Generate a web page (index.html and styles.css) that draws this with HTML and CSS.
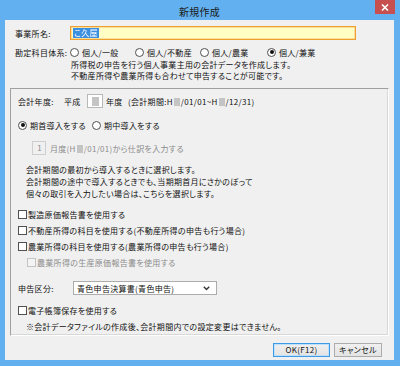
FILE: index.html
```html
<!DOCTYPE html>
<html lang="ja">
<head>
<meta charset="utf-8">
<link rel="stylesheet" href="styles.css">
</head>
<body>
<div class="window">
  <div class="titlebar">
    <span class="title">新規作成</span>
    <span class="close"><svg width="8" height="7" viewBox="0 0 8 7"><path d="M1 0.5 L7 6.5 M7 0.5 L1 6.5" stroke="#fff" stroke-width="1.6"/></svg></span>
  </div>
  <div class="content">
    <div class="row r-name">
      <span class="lbl lbl-top">事業所名:</span>
      <div class="input"><span class="sel">こ久屋</span></div>
    </div>
    <div class="row r-type">
      <span class="lbl lbl-top">勘定科目体系:</span>
      <span class="opt w65"><span class="radio"></span>個人/一般</span>
      <span class="opt w65"><span class="radio"></span>個人/不動産</span>
      <span class="opt w67"><span class="radio"></span>個人/農業</span>
      <span class="opt"><span class="radio on"></span>個人/兼業</span>
    </div>
    <div class="desc-top">
      <div>所得税の申告を行う個人事業主用の会計データを作成します。</div>
      <div>不動産所得や農業所得も合わせて申告することが可能です。</div>
    </div>
    <div class="group">
      <div class="row r-year">
        <span class="lbl-year">会計年度:</span>
        <span class="heisei">平成</span>
        <span class="ybox"><span class="blur b7"></span></span>
        <span class="nendo">年度</span>
        <span>(会計期間:H<span class="blur b6 inl"></span>/01/01~H<span class="blur b6 inl"></span>/12/31)</span>
      </div>
      <div class="row r-intro">
        <span class="opt w74"><span class="radio on"></span>期首導入をする</span>
        <span class="opt"><span class="radio"></span>期中導入をする</span>
      </div>
      <div class="row r-month dis">
        <span class="mbox">1</span>
        <span>月度(H<span class="blur b6 inl"></span>/01/01)から仕訳を入力する</span>
      </div>
      <div class="desc-mid">
        <div>会計期間の最初から導入するときに選択します。</div>
        <div>会計期間の途中で導入するときでも、当期期首月にさかのぼって</div>
        <div>個々の取引を入力したい場合は、こちらを選択します。</div>
      </div>
      <div class="checks">
        <div class="crow"><span class="cb"></span>製造原価報告書を使用する</div>
        <div class="crow"><span class="cb"></span>不動産所得の科目を使用する(不動産所得の申告も行う場合)</div>
        <div class="crow"><span class="cb"></span>農業所得の科目を使用する(農業所得の申告も行う場合)</div>
        <div class="crow sub dis"><span class="cb"></span>農業所得の生産原価報告書を使用する</div>
      </div>
      <div class="row r-kubun">
        <span class="lbl-kubun">申告区分:</span>
        <div class="select"><span>青色申告決算書(青色申告)</span><svg width="7" height="5" viewBox="0 0 7 5"><path d="M0.8 0.8 L3.5 3.6 L6.2 0.8" fill="none" stroke="#333" stroke-width="1.4"/></svg></div>
      </div>
      <div class="crow r-denshi"><span class="cb"></span>電子帳簿保存を使用する</div>
      <div class="note">※会計データファイルの作成後、会計期間内での設定変更はできません。</div>
    </div>
    <div class="buttons">
      <span class="btn ok">OK(F12)</span>
      <span class="btn cancel">キャンセル</span>
    </div>
  </div>
</div>
</body>
</html>
```

FILE: styles.css
```css
* { box-sizing: border-box; }
html, body { margin: 0; padding: 0; }
body {
  width: 400px;
  height: 366px;
  overflow: hidden;
  font-family: "Noto Sans CJK JP", "Noto Sans", sans-serif;
  font-size: 8px;
  font-feature-settings: "palt";
  letter-spacing: 0.3px;
  color: #111;
}
.window {
  width: 400px;
  height: 366px;
  background: #62b0ef;
  padding: 0 6px 6px 5px;
  display: flex;
  flex-direction: column;
}
.titlebar {
  height: 20px;
  position: relative;
  display: flex;
  justify-content: center;
  align-items: flex-start;
  padding-top: 5px;
}
.title {
  font-size: 10px;
  line-height: 14px;
  color: #1a1a1a;
  letter-spacing: 0.3px;
}
.close {
  position: absolute;
  right: -1px;
  top: 0;
  width: 20px;
  height: 14px;
  background: #c74f4f;
  display: flex;
  align-items: center;
  justify-content: center;
}
.content {
  flex: 1;
  background: #f0f0f0;
  padding: 6px 0 0 0;
  display: flex;
  flex-direction: column;
}
.row { display: flex; align-items: center; white-space: nowrap; }
.r-name { height: 14px; padding-left: 10px; }
.lbl-top { width: 55px; }
.input {
  width: 286px;
  height: 14px;
  border: 1px solid #f0a030;
  box-shadow: inset 0 0 0 0.5px #f6c070;
  background: #ffffc4;
  display: flex;
  align-items: center;
  padding-left: 2px;
}
.sel {
  background: #3b8fe0;
  color: #fff;
  line-height: 10px;
  padding: 0 1px;
  filter: blur(0.4px);
}
.r-type { height: 12px; margin-top: 6px; padding-left: 10px; }
.opt { display: inline-flex; align-items: center; }
.w65 { width: 65px; }
.w67 { width: 67px; }
.w74 { width: 74px; }
.radio {
  width: 9px;
  height: 9px;
  border: 1px solid #505050;
  border-radius: 50%;
  background: #fff;
  margin-right: 3px;
  position: relative;
  flex: none;
}
.radio.on::after {
  content: "";
  position: absolute;
  left: 1.5px;
  top: 1.5px;
  width: 4px;
  height: 4px;
  border-radius: 50%;
  background: #111;
}
.desc-top { padding-left: 66px; line-height: 11px; margin-top: 1px; }
.group {
  margin: 7px 5px 0 5px;
  border: 1px solid;
  border-color: #a0a0a0 #ffffff #ffffff #a0a0a0;
  box-shadow: inset -1px -1px 0 #d8d8d8;
  padding: 5px 0 2px 7px;
  display: flex;
  flex-direction: column;
}
.r-year { height: 14px; }
.lbl-year { width: 46px; }
.heisei { width: 23px; }
.ybox {
  width: 16px;
  height: 14px;
  background: #fff;
  border: 1px solid #b8b8b8;
  display: flex;
  align-items: center;
  justify-content: center;
  margin-right: 3px;
}
.nendo { width: 22px; }
.blur { display: inline-block; background: #c4c4c4; filter: blur(0.6px); }
.b7 { width: 7px; height: 9px; }
.b6 { width: 6px; height: 8px; vertical-align: -1px; }
.inl { margin: 0 1px; }
.r-intro { height: 12px; margin-top: 11px; }
.r-month { height: 14px; margin-top: 10px; padding-left: 14px; }
.dis { color: #8c8c8c; }
.mbox {
  width: 14px;
  height: 14px;
  border: 1px solid #cfcfcf;
  background: #f0f0f0;
  text-align: right;
  padding-right: 3px;
  line-height: 12px;
  margin-right: 4px;
}
.desc-mid { margin-top: 9px; padding-left: 8px; line-height: 12px; }
.checks { margin-top: 6px; }
.crow { height: 16px; display: flex; align-items: center; white-space: nowrap; }
.cb {
  width: 9px;
  height: 9px;
  border: 1px solid #505050;
  background: #fff;
  margin-right: 1px;
  flex: none;
}
.crow.sub { padding-left: 9px; }
.crow.sub .cb { border-color: #c4c4c4; background: #f4f4f4; margin-right: 1px; }
.r-kubun { height: 14px; margin-top: 11px; }
.lbl-kubun { width: 55px; }
.select {
  width: 144px;
  height: 14px;
  background: #fff;
  border: 1px solid #acacac;
  display: flex;
  align-items: center;
  justify-content: space-between;
  padding: 0 6px 0 3px;
}
.r-denshi { margin-top: 7px; }
.note { margin-top: 3px; padding-left: 8px; line-height: 12px; }
.buttons {
  margin-top: 7px;
  display: flex;
  justify-content: flex-end;
  gap: 4px;
  padding-right: 12px;
}
.btn {
  height: 14px;
  border: 1px solid #acacac;
  background: linear-gradient(#f0f0f0, #e3e3e3);
  display: flex;
  align-items: center;
  justify-content: center;
  line-height: 12px;
}
.ok { width: 57px; border-color: #3c9ae6; box-shadow: inset 0 0 0 1px #bfe0fa; }
.cancel { width: 48px; }
```
